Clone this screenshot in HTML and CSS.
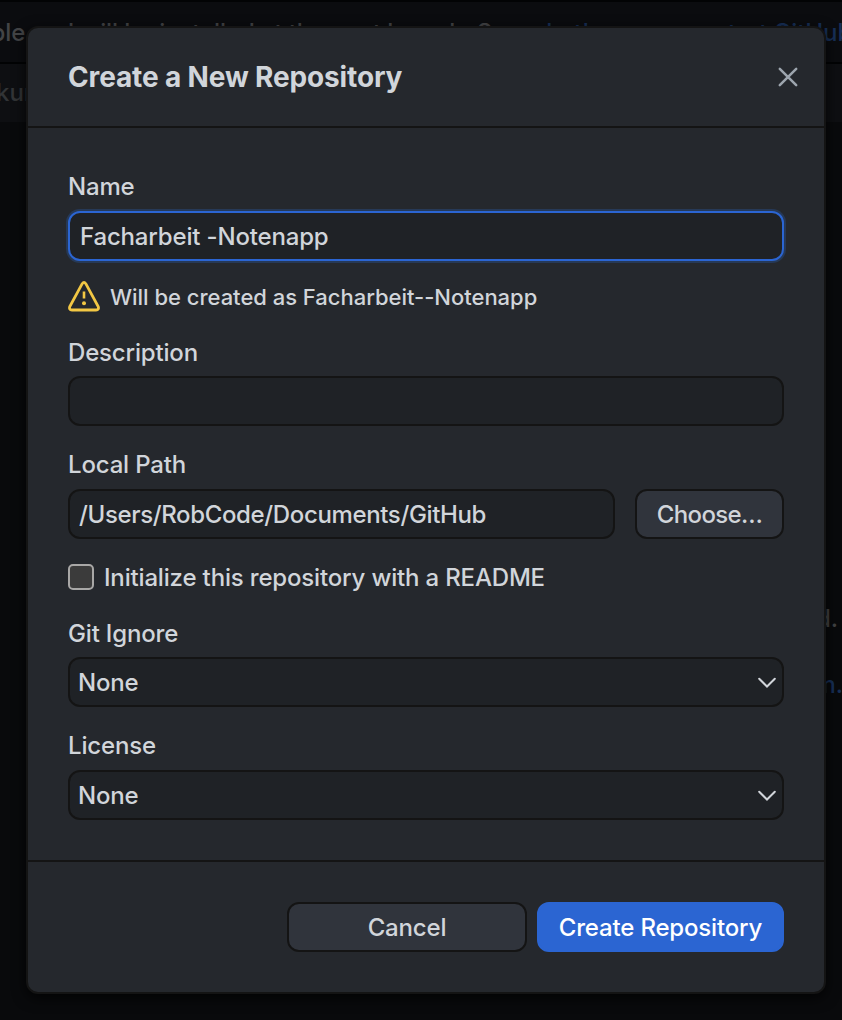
FILE: index.html
```html
<!DOCTYPE html>
<html lang="en">
<head>
<meta charset="utf-8">
<title>Create a New Repository</title>
<link rel="stylesheet" href="styles.css">
</head>
<body>
<div class="backdrop" aria-hidden="true">
  <div class="banner"><span class="banner-text">available and will be installed at the next launch. See <span class="link">what's new</span> or <span class="link">restart GitHub</span></span></div>
  <div class="tabs"><span class="tab-text">kun</span></div>
  <span class="page-text">found.</span>
  <span class="page-text page-link">.com.</span>
</div>
<main class="dialog">
  <header class="header">
    <h1 class="title">Create a New Repository</h1>
    <svg class="close" viewBox="0 0 20 20"><path d="M1.8 1.8 18.2 18.2M18.2 1.8 1.8 18.2"/></svg>
  </header>
  <form class="content">
    <label class="field"><span class="label name-label">Name</span><span class="control focused"><span class="name-value">Facharbeit -Notenapp</span></span></label>
    <div class="warning">
      <svg class="warning-icon" viewBox="0 0 32 32"><path class="triangle" d="M14.2 2.7Q16 .2 17.8 2.7L30.2 25.5Q31.3 28.8 28 29H4Q.7 28.8 1.8 25.5Z"/><path class="bang" d="M16 10.5v7"/><circle cx="16" cy="22.3" r="2"/></svg>
      <span class="warning-text">Will be created as Facharbeit--Notenapp</span>
    </div>
    <label class="field"><span class="label desc-label">Description</span><span class="control"></span></label>
    <div class="field"><span class="label path-label">Local Path</span>
      <div class="path-row"><span class="control path-control"><span class="path-value">/Users/RobCode/Documents/GitHub</span></span><span class="button choose"><span class="choose-text">Choose…</span></span></div>
    </div>
    <div class="check-row"><span class="checkbox"></span><span class="check-text">Initialize this repository with a README</span></div>
    <div class="field"><span class="label ignore-label">Git Ignore</span><span class="control select"><span>None</span><svg class="chevron" viewBox="0 0 18 12"><path d="M1.2 1.7 9 9.5 16.8 1.7"/></svg></span></div>
    <div class="field"><span class="label license-label">License</span><span class="control select"><span>None</span><svg class="chevron" viewBox="0 0 18 12"><path d="M1.2 1.7 9 9.5 16.8 1.7"/></svg></span></div>
  </form>
  <footer class="footer"><span class="button cancel"><span class="cancel-text">Cancel</span></span><span class="button primary"><span class="primary-text">Create Repository</span></span></footer>
</main>
</body>
</html>
```
FILE: styles.css
```css
* { box-sizing: border-box; }
body { margin: 0; width: 842px; height: 1020px; padding: 26px; overflow: hidden; position: relative; background: #090a0c; color: #d1d5da; font: 450 24px/30px Inter, "Liberation Sans", sans-serif; letter-spacing: -0.17px; }
.backdrop { position: absolute; inset: 0; overflow: hidden; color: #434446; letter-spacing: 0; }
.banner { height: 64px; border: solid #020304; border-width: 2px 0; background: #0b0c0f; display: flex; align-items: center; justify-content: flex-start; }
.banner-text { margin-left: -75px; padding-top: 2px; letter-spacing: -0.11px; white-space: nowrap; }
.link { color: #172f57; }
.tabs { height: 58px; line-height: 58px; background: #0e0f12; color: #323436; }
.tab-text { margin-left: -4px; }
.page-text { position: absolute; right: 4px; top: 604px; }
.page-link { right: -1px; top: 670px; color: #172f57; }
.dialog { position: relative; width: 800px; height: 968px; border: 2px solid #141414; border-radius: 12px; background: #25282d; box-shadow: 0 4px 14px rgba(0, 0, 0, 0.75); display: flex; flex-direction: column; }
.header { height: 100px; padding: 0 26px 0 40px; border-bottom: 2px solid #141414; display: flex; align-items: center; justify-content: space-between; }
.title { margin: 0; font-size: 28px; font-weight: 660; line-height: 34px; letter-spacing: -0.14px; white-space: nowrap; }
.close { width: 20px; height: 20px; fill: none; stroke: #9da5ae; stroke-width: 2.5; stroke-linecap: round; }
.content { height: 732px; padding: 40px 40px 0; display: flex; flex-direction: column; gap: 20px; }
.field { display: flex; flex-direction: column; gap: 5px; }
.label { height: 38px; line-height: 38px; align-self: flex-start; }
.desc-label, .ignore-label { line-height: 40px; }
.control { height: 50px; flex: 0 0 50px; width: 100%; border: 2px solid #141414; border-radius: 12px; background: #1f2226; padding: 2px 10px 0; display: flex; align-items: center; white-space: nowrap; }
.focused { border-color: #2b65d2; box-shadow: 0 0 0 2px #263957; }
.warning { height: 32px; display: flex; align-items: center; gap: 10px; white-space: nowrap; }
.warning-text { font-size: 22px; letter-spacing: -0.02px; }
.warning-icon { width: 32px; height: 32px; fill: #f2c744; }
.triangle { fill: none; stroke: #f2c744; stroke-width: 2.8; }
.bang { stroke: #f2c744; stroke-width: 2.6; }
.path-row { display: flex; gap: 20px; }
.path-row .control { flex: 1; }
.path-control { padding-left: 9px; }
.path-value { letter-spacing: -0.36px; }
.button { height: 50px; border: 2px solid #141414; border-radius: 12px; background: #30343c; padding-top: 2px; display: flex; align-items: center; justify-content: center; white-space: nowrap; }
.choose { width: 149px; }
.choose-text { letter-spacing: -0.6px; }
.check-row { height: 35px; display: flex; align-items: center; gap: 10px; white-space: nowrap; }
.check-text { padding-top: 2px; }
.checkbox { width: 26px; height: 26px; border: 2px solid #a8a7a6; border-radius: 5px; background: #3b3b3b; }
.select { justify-content: space-between; padding: 2px 6px 0 8px; }
.chevron { width: 18px; height: 12px; margin-bottom: 1px; fill: none; stroke: #d1d5da; stroke-width: 2; stroke-linecap: round; }
.footer { flex: 1; border-top: 2px solid #141414; padding: 40px; display: flex; justify-content: flex-end; gap: 10px; }
.cancel { width: 240px; }
.primary { width: 247px; border-color: #2b65d2; background: #2b65d2; color: #fff; }
```
